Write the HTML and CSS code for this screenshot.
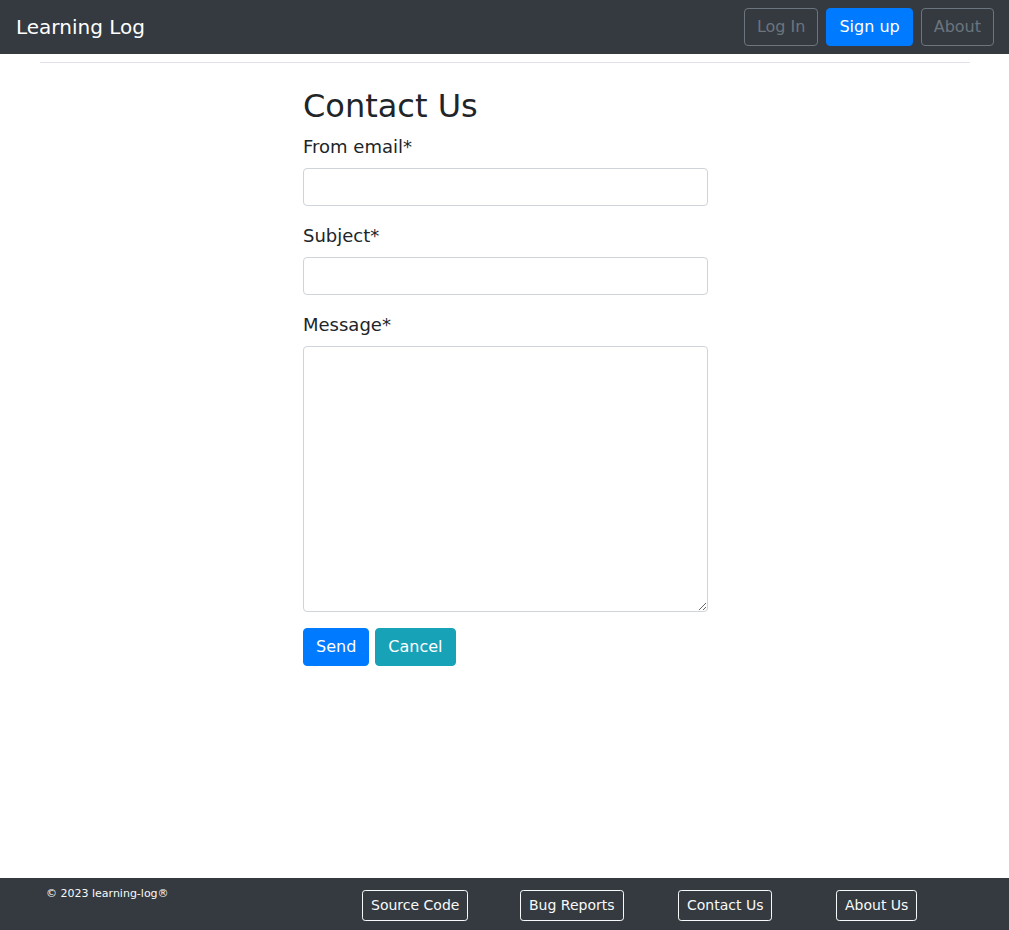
FILE: index.html
```html
<!DOCTYPE html>
<html lang="en">
<head>
<meta charset="utf-8">
<title>Learning Log</title>
<link rel="stylesheet" href="styles.css">
</head>
<body>
<nav class="navbar">
  <a class="brand" href="#">Learning Log</a>
  <div class="nav-actions">
    <a class="btn btn-outline-secondary" href="#">Log In</a>
    <a class="btn btn-primary" href="#">Sign up</a>
    <a class="btn btn-outline-secondary" href="#">About</a>
  </div>
</nav>
<main class="container">
  <hr class="divider">
  <div class="contact">
    <h2 class="title">Contact Us</h2>
    <form class="form">
      <div class="form-group">
        <label class="label">From email*</label>
        <input class="control" type="email">
      </div>
      <div class="form-group">
        <label class="label">Subject*</label>
        <input class="control" type="text">
      </div>
      <div class="form-group">
        <label class="label">Message*</label>
        <textarea class="control textarea"></textarea>
      </div>
      <div class="actions">
        <button class="btn btn-primary" type="button">Send</button>
        <button class="btn btn-info" type="button">Cancel</button>
      </div>
    </form>
  </div>
</main>
<footer class="footer">
  <div class="footer-grid">
    <div class="fcol"><small class="copy">© 2023 learning-log®</small></div>
    <div class="fcol"><a class="btn btn-sm btn-outline-light" href="#">Source Code</a></div>
    <div class="fcol"><a class="btn btn-sm btn-outline-light" href="#">Bug Reports</a></div>
    <div class="fcol"><a class="btn btn-sm btn-outline-light" href="#">Contact Us</a></div>
    <div class="fcol"><a class="btn btn-sm btn-outline-light" href="#">About Us</a></div>
  </div>
</footer>
</body>
</html>
```
FILE: styles.css
```css
* { box-sizing: border-box; }
html, body { margin: 0; padding: 0; }
body {
  font-family: "DejaVu Sans", sans-serif;
  font-size: 16px;
  line-height: 1.5;
  color: #212529;
  background: #fff;
  min-height: 100vh;
  display: flex;
  flex-direction: column;
}
a { text-decoration: none; }

.navbar {
  background: #343a40;
  display: flex;
  align-items: center;
  justify-content: space-between;
  padding: 8px 15px 8px 16px;
}
.brand {
  color: #fff;
  font-size: 20px;
  line-height: 30px;
}
.nav-actions { display: flex; gap: 8px; }

.btn {
  display: inline-block;
  font-family: inherit;
  font-size: 16px;
  line-height: 24px;
  padding: 6px 12px;
  border: 1px solid transparent;
  border-radius: 4px;
  cursor: pointer;
  text-align: center;
}
.btn-primary { background: #007bff; border-color: #007bff; color: #fff; }
.btn-info { background: #17a2b8; border-color: #17a2b8; color: #fff; }
.btn-outline-secondary { background: transparent; border-color: #6c757d; color: #6c757d; }
.btn-sm { font-size: 14px; line-height: 21px; padding: 4px 8px; border-radius: 3.2px; }
.btn-outline-light { background: transparent; border-color: #f8f9fa; color: #f8f9fa; }

.container {
  width: 100%;
  max-width: 960px;
  margin: 0 auto;
  padding: 0 15px;
}
.divider {
  border: 0;
  border-top: 1px solid #e1e1ec;
  margin: 8px 0 16px;
}
.contact {
  width: 405px;
  margin: 0 auto;
  padding-top: 8px;
  position: relative;
  left: 1px;
}
.title {
  font-size: 32px;
  font-weight: 500;
  line-height: 1.2;
  margin: 0 0 8px;
}
.form-group { margin-bottom: 16px; }
.label {
  display: block;
  font-size: 18px;
  line-height: 27px;
  margin-bottom: 8px;
}
.control {
  display: block;
  width: 100%;
  height: 38px;
  padding: 6px 12px;
  font-family: inherit;
  font-size: 16px;
  line-height: 24px;
  color: #495057;
  background: #fff;
  border: 1px solid #ced4da;
  border-radius: 4px;
}
.textarea { height: 266px; resize: vertical; }
.actions { display: flex; gap: 6px; }

.footer {
  margin-top: auto;
  background: #343a40;
  padding: 8px 0 9px;
}
.footer-grid {
  display: grid;
  grid-template-columns: 316px repeat(4, 158px);
  padding-left: 31px;
  align-items: start;
}
.fcol { padding: 0 15px; }
.fcol .btn { margin-top: 4px; }
.copy {
  display: block;
  color: #f8f9fa;
  font-size: 11px;
  line-height: 16.5px;
}
```
